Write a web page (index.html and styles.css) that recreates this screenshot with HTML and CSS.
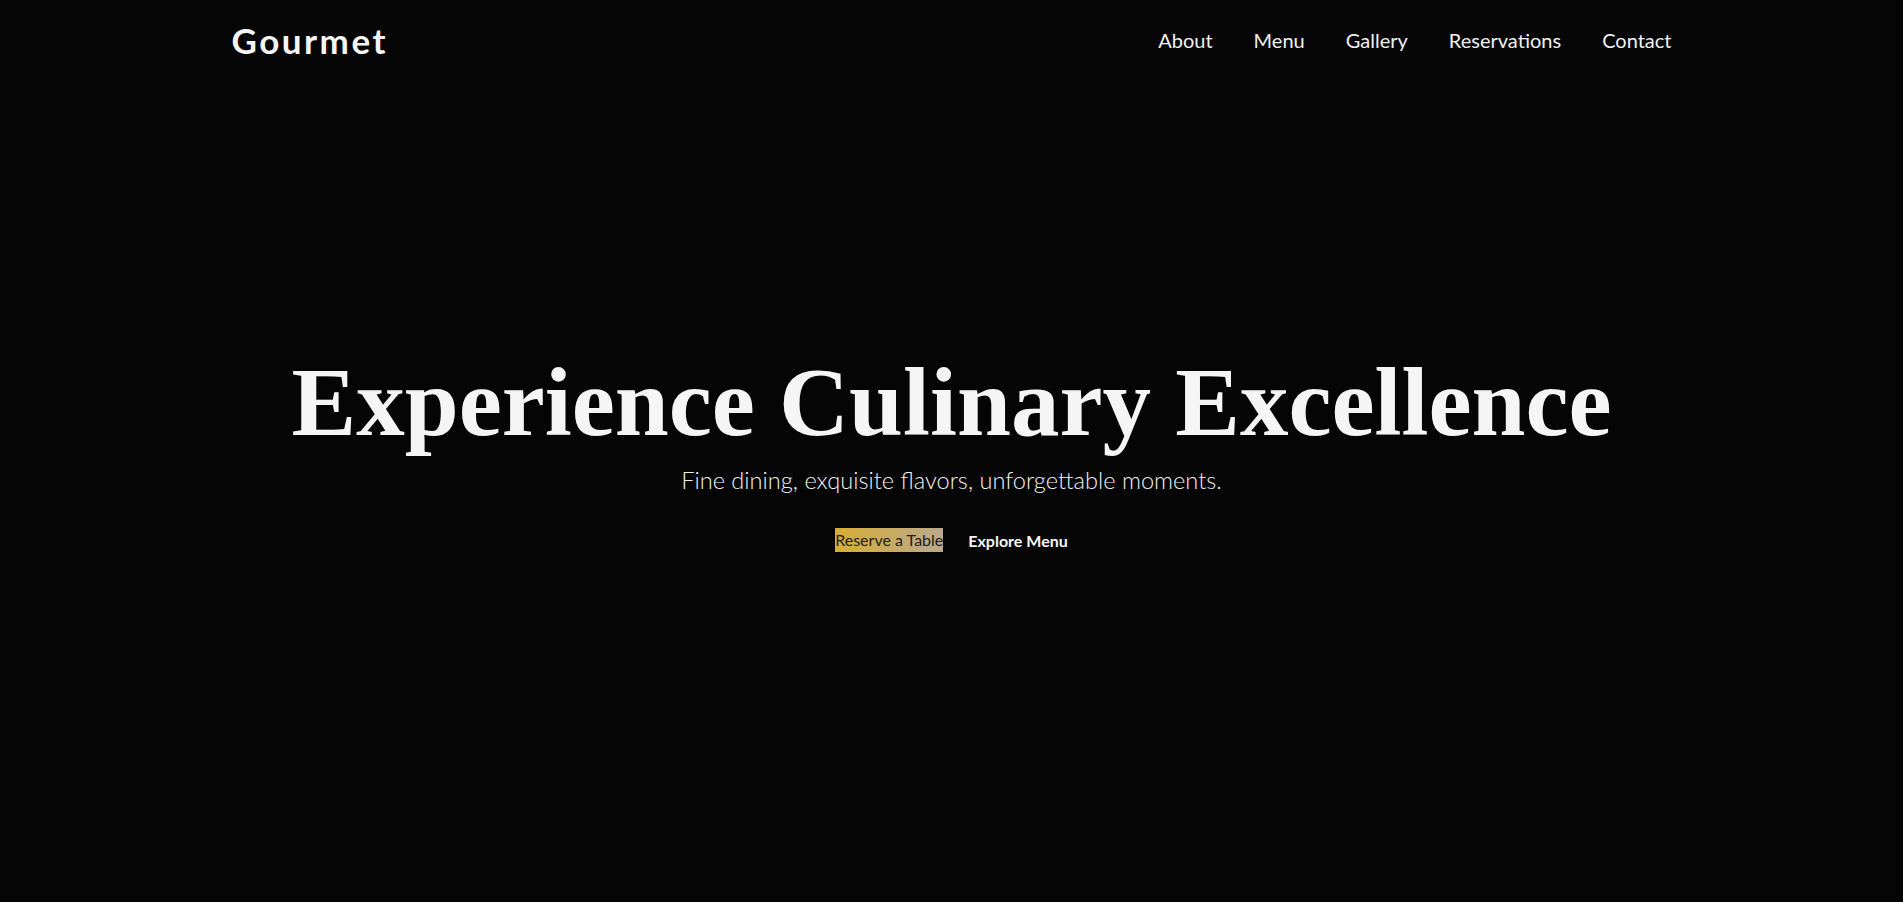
FILE: index.html
```html
<!DOCTYPE html>
<html lang="en">
<head>
<meta charset="utf-8">
<title>Gourmet</title>
<link rel="stylesheet" href="styles.css">
</head>
<body>
<header class="site-header">
  <div class="header-inner">
    <a class="logo" href="#">Gourmet</a>
    <nav class="nav">
      <a href="#">About</a>
      <a href="#">Menu</a>
      <a href="#">Gallery</a>
      <a href="#">Reservations</a>
      <a href="#">Contact</a>
    </nav>
  </div>
</header>
<main class="hero">
  <h1 class="hero-title">Experience Culinary Excellence</h1>
  <p class="hero-sub">Fine dining, exquisite flavors, unforgettable moments.</p>
  <div class="hero-actions">
    <a class="btn-primary" href="#">Reserve a Table</a>
    <a class="btn-link" href="#">Explore Menu</a>
  </div>
</main>
</body>
</html>
```

FILE: styles.css
```css
* { box-sizing: border-box; }
html, body { margin: 0; padding: 0; }
body {
  background: #050505;
  color: #f5f5f5;
  font-family: Lato, "Noto Sans", sans-serif;
  height: 902px;
  overflow: hidden;
}
a { text-decoration: none; color: inherit; }

.site-header {
  position: absolute;
  top: 0; left: 0; right: 0;
  z-index: 2;
}
.header-inner {
  max-width: 1440px;
  margin: 0 auto;
  height: 80px;
  display: flex;
  align-items: center;
  justify-content: space-between;
}
.logo {
  font-size: 35px;
  font-weight: 700;
  letter-spacing: 2.5px;
  color: #f5f5f5;
}
.nav {
  display: flex;
  gap: 41px;
}
.nav a {
  font-size: 20px;
  color: #f0f0f0;
}

.hero {
  height: 902px;
  display: flex;
  flex-direction: column;
  align-items: center;
  justify-content: center;
  text-align: center;
}
.hero-title {
  margin: 0 0 5px;
  font-family: "Liberation Serif", "DejaVu Serif", serif;
  font-weight: 700;
  font-size: 97px;
  line-height: 1.2;
  letter-spacing: 0;
  color: #f5f5f5;
}
.hero-sub {
  margin: 0 0 34px;
  font-size: 23.6px;
  font-weight: 300;
  color: #f2f2f2;
}
.hero-actions {
  display: flex;
  gap: 25px;
  align-items: center;
  margin-bottom: 5px;
}
.btn-primary {
  display: inline-block;
  font-size: 16px;
  line-height: 24px;
  color: #1c1c1c;
  background: linear-gradient(to right, #d6ae35, #bba88c);
}
.btn-link {
  font-size: 16px;
  font-weight: 700;
  color: #f5f5f5;
}
```
